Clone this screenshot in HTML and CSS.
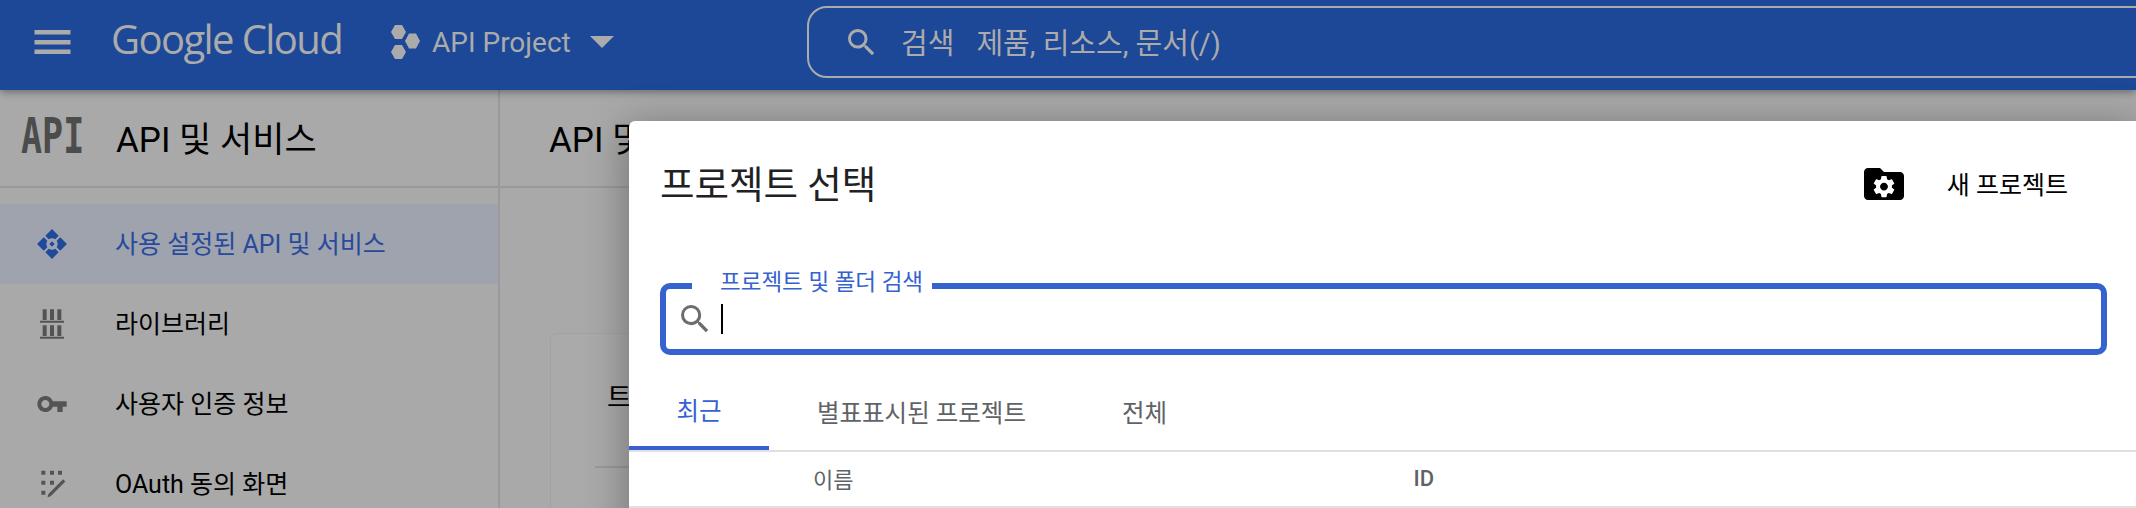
FILE: index.html
```
<!DOCTYPE html>
<html lang="ko">
<head>
<meta charset="utf-8">
<title>프로젝트 선택</title>
<link rel="stylesheet" href="styles.css">
</head>
<body>
<div class="page">
  <header class="topbar">
    <svg class="menu-icon" viewBox="0 0 36 24"><path d="M0 0h36v4.500H0zM0 10h36v4.500H0zM0 19.500h36V24H0z"/></svg>
    <div class="logo">Google Cloud</div>
    <div class="project">
      <svg class="hex-icon" viewBox="0 0 29 36"><path d="M4 1h7l4 7-4 7H4L0 8zM18 9.500h7l4 7.500-4 7.500h-7L14 17zM4 21h7l4 7-4 7H4l-4-7z"/></svg>
      <span class="project-name">API Project</span>
      <svg class="caret" viewBox="0 0 24 12"><path d="M0 0h24L12 12z"/></svg>
    </div>
    <div class="global-search">
      <svg class="search-icon" viewBox="3 3 18 18"><path d="M15.500 14h-.79l-.28-.27A6.470 6.470 0 0 0 16 9.500 6.500 6.500 0 1 0 9.500 16c1.610 0 3.090-.59 4.230-1.570l.27.28v.79l5 4.990L20.490 19l-4.990-5zm-6 0C7.010 14 5 11.990 5 9.500S7.010 5 9.500 5 14 7.010 14 9.500 11.990 14 9.500 14z"/></svg>
      <span class="search-label">검색</span>
      <span class="search-hint">제품, 리소스, 문서(/)</span>
    </div>
  </header>

  <div class="content">
    <aside class="sidebar">
      <div class="side-head">
        <span class="api-mark">API</span>
        <h2 class="side-title">API 및 서비스</h2>
      </div>
      <nav class="nav">
        <a class="nav-item active">
          <svg class="nav-icon" viewBox="0 0 24 24"><path d="M12 .8l5 5-2.500 2.700Q12 7 9.500 8.500L7 5.800zM12 23.200l-5-5 2.500-2.700q2.500 1.500 5 0l2.500 2.700zM.8 12l5-5 2.700 2.500Q7 12 8.500 14.500L5.800 17zM23.200 12l-5 5-2.700-2.500q1.500-2.500 0-5L18.200 7zM12 10l2 2-2 2-2-2z"/></svg>
          <span>사용 설정된 API 및 서비스</span>
        </a>
        <a class="nav-item">
          <svg class="nav-icon" viewBox="0 0 24 24"><path d="M5 1h3v8H5zM10.500 1h3v8h-3zM16 1h3v8h-3zM3 9.500h18v1.500H3zM5 13h3v8H5zM10.500 13h3v8h-3zM16 13h3v8h-3zM3 21.500h18V23H3z"/></svg>
          <span>라이브러리</span>
        </a>
        <a class="nav-item">
          <svg class="nav-icon" viewBox="0 0 24 24"><path d="M12.650 10C11.830 7.670 9.610 6 7 6c-3.310 0-6 2.690-6 6s2.690 6 6 6c2.610 0 4.830-1.670 5.650-4H16v4h4v-4h3v-4H12.650zM7 15c-1.650 0-3-1.350-3-3s1.350-3 3-3 3 1.350 3 3-1.350 3-3 3z"/></svg>
          <span>사용자 인증 정보</span>
        </a>
        <a class="nav-item">
          <svg class="nav-icon" viewBox="0 0 24 24"><path d="M4 2h3v3H4zM10.500 2h3v3h-3zM16.500 2h3v3h-3zM4 9.500h3v3H4zM10.500 9.500h3v3h-3zM4 17h3v3H4zM20.300 8.500l1.700 1.700-11 11-2.400.7.700-2.400z"/></svg>
          <span>OAuth 동의 화면</span>
        </a>
      </nav>
    </aside>
    <main class="main">
      <div class="main-head"><h2 class="main-title">API 및 서비스</h2></div>
      <section class="card">
        <h3 class="card-title">트래픽</h3>
        <div class="card-rule"></div>
      </section>
    </main>
  </div>

  <div class="dialog">
    <div class="dialog-head">
      <h1 class="dialog-title">프로젝트 선택</h1>
      <button class="new-project">
        <svg class="folder-icon" viewBox="2 4 20 16">
          <path d="M20 6h-8l-2-2H4c-1.100 0-2 .9-2 2v12c0 1.100.9 2 2 2h16c1.100 0 2-.9 2-2V8c0-1.100-.9-2-2-2z"/>
          <path class="gear" transform="translate(5.400 6.700) scale(.55)" d="M19.140 12.940c.04-.3.06-.61.06-.94 0-.32-.02-.64-.07-.94l2.030-1.580c.18-.14.23-.41.12-.61l-1.920-3.320c-.12-.22-.37-.29-.59-.22l-2.390.96c-.5-.38-1.030-.7-1.620-.94l-.36-2.540c-.04-.24-.24-.41-.48-.41h-3.840c-.24 0-.43.17-.47.41l-.36 2.540c-.59.24-1.130.57-1.620.94l-2.390-.96c-.22-.08-.47 0-.59.22L2.740 8.870c-.12.21-.08.47.12.61l2.030 1.580c-.05.3-.09.63-.09.94s.02.64.07.94l-2.030 1.580c-.18.14-.23.41-.12.61l1.920 3.320c.12.22.37.29.59.22l2.390-.96c.5.38 1.030.7 1.620.94l.36 2.540c.05.24.24.41.48.41h3.840c.24 0 .44-.17.47-.41l.36-2.540c.59-.24 1.130-.56 1.620-.94l2.390.96c.22.08.47 0 .59-.22l1.920-3.320c.12-.22.07-.47-.12-.61l-2.010-1.580zM12 15.600c-1.980 0-3.600-1.620-3.600-3.600s1.620-3.600 3.600-3.600 3.600 1.620 3.600 3.600-1.620 3.600-3.600 3.600z"/>
        </svg>
        <span>새 프로젝트</span>
      </button>
    </div>
    <div class="field">
      <span class="field-label">프로젝트 및 폴더 검색</span>
      <svg class="field-icon" viewBox="3 3 18 18"><path d="M15.500 14h-.79l-.28-.27A6.470 6.470 0 0 0 16 9.500 6.500 6.500 0 1 0 9.500 16c1.610 0 3.090-.59 4.230-1.570l.27.28v.79l5 4.990L20.490 19l-4.990-5zm-6 0C7.010 14 5 11.990 5 9.500S7.010 5 9.500 5 14 7.010 14 9.500 11.990 14 9.500 14z"/></svg>
      <span class="text-cursor"></span>
    </div>
    <div class="tabs">
      <div class="tab active">최근</div>
      <div class="tab">별표표시된 프로젝트</div>
      <div class="tab">전체</div>
    </div>
    <div class="table-head">
      <span class="col-name">이름</span>
      <span class="col-id">ID</span>
    </div>
  </div>
</div>
</body>
</html>
```
FILE: styles.css
```
* { box-sizing: border-box; }
html, body { margin: 0; height: 100%; }
body {
  font-family: Roboto, "Noto Sans CJK KR", sans-serif;
  overflow: hidden;
  background: #a9a9a9;
  color: #000;
}
h1, h2, h3 { margin: 0; font-weight: 400; }
.page { position: relative; width: 2136px; height: 508px; overflow: hidden; }

.topbar {
  position: relative;
  z-index: 1;
  height: 90px;
  display: flex;
  align-items: center;
  padding: 0 0 6px 34px;
  background: #1d4898;
  color: #ababab;
  box-shadow: 0 2px 8px rgba(0,0,0,.38);
}
.menu-icon { width: 37px; height: 24px; fill: #ababab; margin-right: 40px; flex: none; }
.logo {
  width: 232px;
  margin-top: -7px;
  font-family: "Open Sans", sans-serif;
  font-size: 40px;
  letter-spacing: -1.600px;
  white-space: nowrap;
  flex: none;
}
.project { display: flex; align-items: center; margin-left: 48px; flex: none; width: 224px; }
.hex-icon { width: 29px; height: 36px; fill: #ababab; flex: none; }
.project-name { font-size: 28px; margin-left: 12px; white-space: nowrap; }
.caret { width: 24px; height: 12px; fill: #ababab; margin-left: 19px; flex: none; }
.global-search {
  margin-left: 192px;
  flex: 1;
  height: 72px;
  margin-right: -30px;
  display: flex;
  align-items: center;
  padding-left: 39px;
  border: 2px solid #ababab;
  border-radius: 20px;
}
.search-icon { width: 27px; height: 27px; fill: #ababab; flex: none; }
.search-label { margin: 0 0 3px 26px; font-size: 29px; }
.search-hint { margin: 0 0 3px 22px; font-size: 29px; }

.content { display: flex; height: 418px; }
.sidebar { width: 500px; flex: none; border-right: 2px solid #9a9a9a; }
.side-head {
  height: 98px;
  display: flex;
  align-items: center;
  border-bottom: 2px solid #9a9a9a;
  padding: 0 0 4px 21px;
}
.api-mark {
  width: 63px;
  font-family: "DejaVu Sans Mono", monospace;
  font-weight: 700;
  font-size: 35px;
  line-height: 40px;
  color: #4c4c4c;
  flex: none;
  transform: scaleY(1.4);
}
.side-title { margin-left: 32px; font-size: 35px; white-space: nowrap; }
.nav { padding-top: 16px; }
.nav-item {
  height: 80px;
  display: flex;
  align-items: center;
  padding-left: 36px;
  font-size: 25px;
  white-space: nowrap;
}
.nav-item span { margin: 0 0 5px 47px; }
.nav-icon { width: 32px; height: 32px; fill: #545454; flex: none; }
.nav-item.active { background: #9fa3ae; color: #274a9c; }
.nav-item.active .nav-icon { fill: #1f4a9b; }

.main { flex: 1; min-width: 0; }
.main-head {
  height: 98px;
  display: flex;
  align-items: center;
  padding: 0 0 4px 49px;
  border-bottom: 2px solid #9a9a9a;
}
.main-title { font-size: 35px; white-space: nowrap; }
.card {
  margin: 145px 0 0 50px;
  height: 300px;
  padding: 46px 0 0 56px;
  border: 1px solid #a2a2a2;
  border-radius: 6px;
  background: #aaaaaa;
}
.card-title { font-size: 27px; line-height: 36px; }
.card-rule { height: 2px; margin: 50px 0 0 -12px; background: #9a9a9a; }

.dialog {
  position: absolute;
  left: 629px;
  top: 121px;
  right: 0;
  bottom: -40px;
  z-index: 2;
  background: #fff;
  border-radius: 6px 0 0 0;
  box-shadow: 0 8px 40px 4px rgba(0,0,0,.3);
}
.dialog-head {
  height: 124px;
  display: flex;
  align-items: center;
  justify-content: space-between;
  padding: 0 68px 0 31px;
}
.dialog-title { font-size: 37.500px; font-weight: 400; color: #202124; white-space: nowrap; margin-top: -3px; }
.new-project {
  display: flex;
  align-items: center;
  border: 0;
  padding: 0;
  background: none;
  font: inherit;
  font-size: 25px;
  color: #000;
}
.new-project span { margin-left: 43px; white-space: nowrap; }
.folder-icon { width: 40px; height: 32px; fill: #000; flex: none; margin-top: 2px; }
.gear { fill: #fff; }

.field {
  position: relative;
  margin: 38px 29px 0 31px;
  height: 72px;
  display: flex;
  align-items: center;
  padding-left: 15px;
  border: 6px solid #3562cf;
  border-radius: 10px;
}
.field-label {
  position: absolute;
  left: 26px;
  top: -19px;
  padding: 0 9px 0 28px;
  height: 24px;
  line-height: 24px;
  font-size: 22.500px;
  color: #3562cf;
  background: #fff;
  white-space: nowrap;
}
.field-icon { width: 28px; height: 28px; fill: #6d6d6d; flex: none; }
.text-cursor { width: 2px; height: 30px; margin-left: 12px; background: #000; }

.tabs { display: flex; height: 97px; padding-top: 26px; border-bottom: 2px solid #e0e0e0; }
.tab {
  height: 69px;
  padding: 0 48px 8px;
  display: flex;
  align-items: center;
  justify-content: center;
  font-size: 24.500px;
  color: #5f6368;
  white-space: nowrap;
  margin-bottom: -2px;
}
.tab.active { width: 140px; padding: 0 0 8px; color: #3562cf; border-bottom: 4px solid #3562cf; }

.table-head {
  height: 56px;
  display: flex;
  align-items: center;
  padding: 0 0 2px 184px;
  font-size: 22px;
  color: #5f6368;
  border-bottom: 2px solid #e0e0e0;
}
.col-id { margin-left: 560px; font-weight: 500; }
```
